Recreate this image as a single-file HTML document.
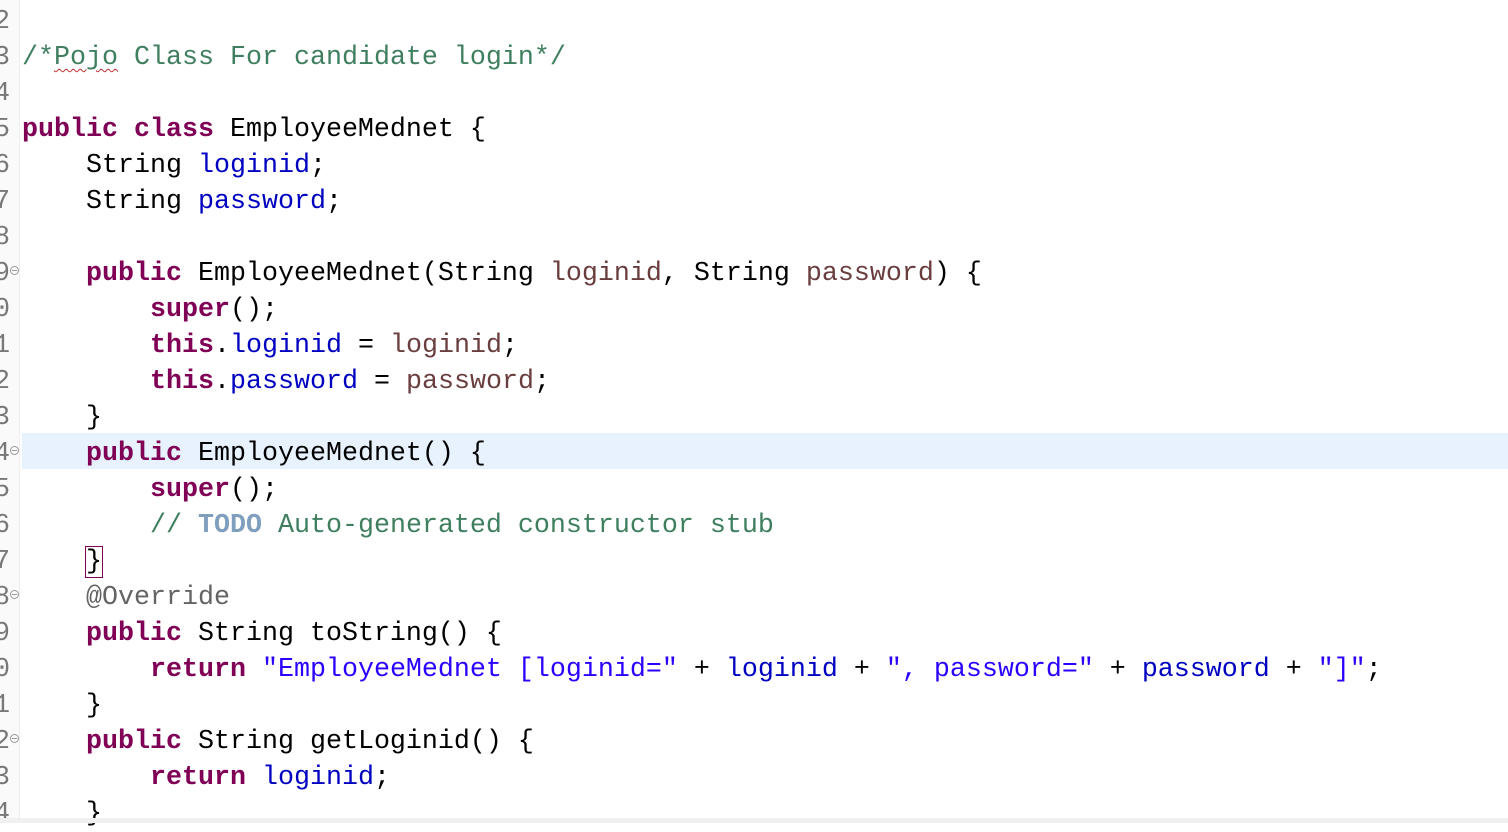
<!DOCTYPE html>
<html><head><meta charset="utf-8"><style>
html,body{margin:0;padding:0;width:1508px;height:823px;overflow:hidden;background:#fff;}
#g{position:absolute;left:0;top:0;width:19px;height:823px;background:#fafafa;border-right:1px solid #eee;}
.hl{position:absolute;left:22px;top:433px;width:1486px;height:36px;background:#e8f2fe;}
.ln{position:absolute;right:1498px;font:26.67px "Liberation Mono",monospace;color:#787878;line-height:36px;white-space:pre;}
.fold{position:absolute;left:10px;width:7px;height:7px;border:1px solid #999;border-radius:50%;font-size:0;}
.fold:after{content:"";position:absolute;left:1px;top:3px;width:5px;height:1px;background:#999;}
pre{position:absolute;left:22px;top:4px;margin:0;font:26.67px "Liberation Mono",monospace;line-height:36px;color:#000;}
.k{color:#7f0055;font-weight:bold}.f{color:#0000c0}.p{color:#6a3e3e}.s{color:#2a00ff}.c{color:#3f7f5f}.t{color:#7f9fbf;font-weight:bold}.a{color:#646464}
.w{text-decoration:underline wavy #c03030;text-decoration-thickness:1px;text-underline-offset:4px;}
.box{outline:1px solid #7f0055;}
#bot{position:absolute;left:0;top:818px;width:1508px;height:5px;background:#f0f0f0;}
</style></head><body>
<div id="g"></div>
<div class="hl"></div>
<div class="ln" style="top:4px">2
3
4
5
6
7
8
9
0
1
2
3
4
5
6
7
8
9
0
1
2
3
4</div>
<div class="fold" style="top:266px"></div>
<div class="fold" style="top:446px"></div>
<div class="fold" style="top:590px"></div>
<div class="fold" style="top:734px"></div>
<pre>&#8203;
<span class="c">/*<span class="w">Pojo</span> Class For candidate login*/</span>

<span class="k">public</span> <span class="k">class</span> EmployeeMednet {
    String <span class="f">loginid</span>;
    String <span class="f">password</span>;

    <span class="k">public</span> EmployeeMednet(String <span class="p">loginid</span>, String <span class="p">password</span>) {
        <span class="k">super</span>();
        <span class="k">this</span>.<span class="f">loginid</span> = <span class="p">loginid</span>;
        <span class="k">this</span>.<span class="f">password</span> = <span class="p">password</span>;
    }
    <span class="k">public</span> EmployeeMednet() {
        <span class="k">super</span>();
        <span class="c">// <span class="t">TODO</span> Auto-generated constructor stub</span>
    <span class="box">}</span>
    <span class="a">@Override</span>
    <span class="k">public</span> String toString() {
        <span class="k">return</span> <span class="s">"EmployeeMednet [loginid="</span> + <span class="f">loginid</span> + <span class="s">", password="</span> + <span class="f">password</span> + <span class="s">"]"</span>;
    }
    <span class="k">public</span> String getLoginid() {
        <span class="k">return</span> <span class="f">loginid</span>;
    }</pre>
<div id="bot"></div>
</body></html>
